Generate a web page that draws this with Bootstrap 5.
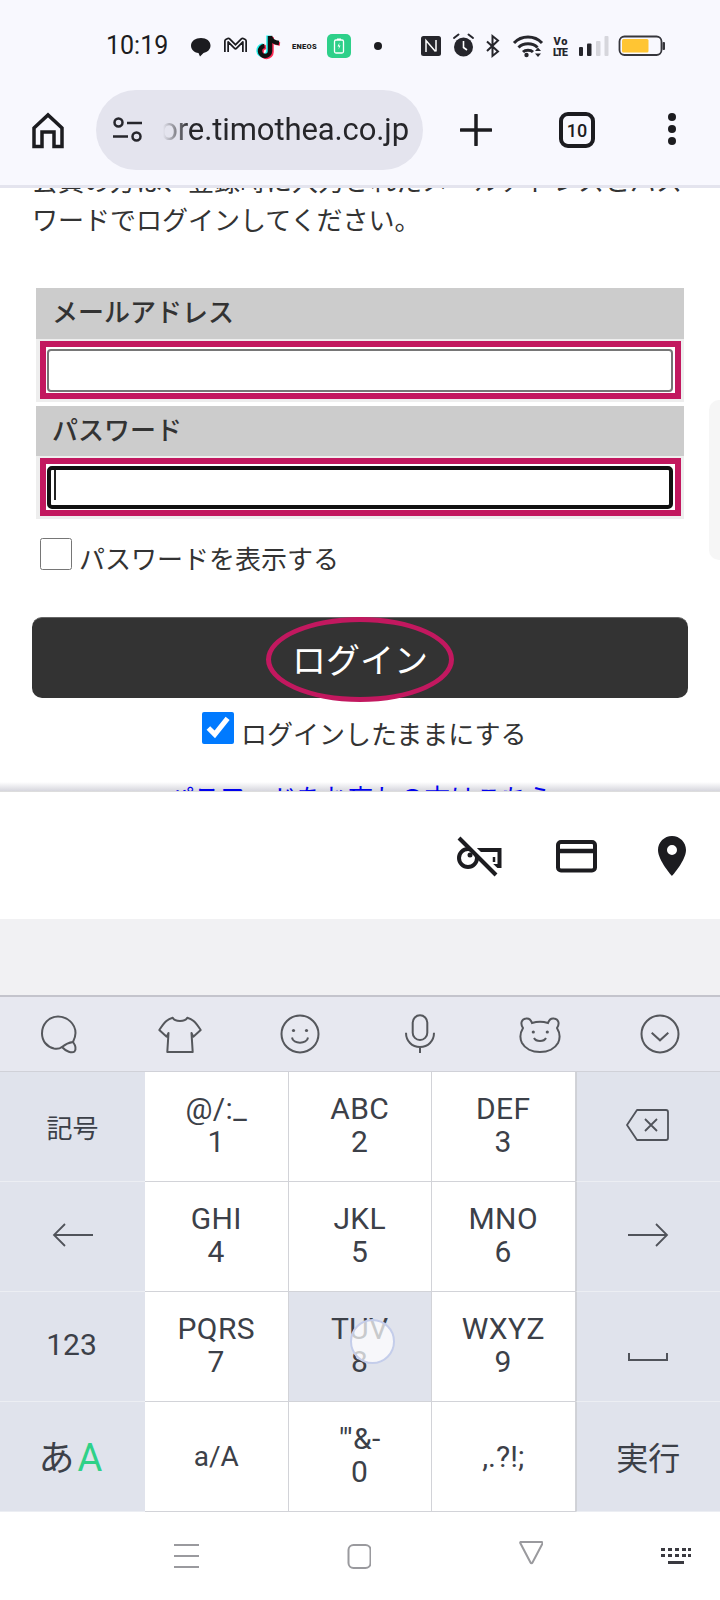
<!DOCTYPE html>
<html lang="ja">
<head>
    <meta charset="UTF-8">
    <meta name="viewport" content="width=device-width, initial-scale=1.0">
    <title>ログイン</title>
    <link href="https://cdn.jsdelivr.net/npm/bootstrap@5.3.0/dist/css/bootstrap.min.css" rel="stylesheet">
    <style>
        body {
            width: 720px;
            height: 1600px;
            overflow: hidden;
            background: #fff;
            font-family: Roboto, "Noto Sans CJK JP", sans-serif;
        }
        svg { display: block; flex: none; }

        /* browser chrome */
        .chrome { height: 188px; background: #f8f8fe; border-bottom: 3px solid #e4e4ee; position: relative; z-index: 2; }
        .status-row { height: 90px; padding-top: 30px; }
        .clock { width: 186px; padding-left: 106px; font-size: 25px; line-height: 32px; color: #1c1c20; }
        .status-gap { margin-left: 30px; }
        .tool-row { height: 80px; }
        .url-pill { width: 327px; height: 80px; margin-left: 32px; background: #e4e4ee; border-radius: 40px; padding-left: 17px; }
        .url-text { width: 250px; margin-left: 16px; overflow: hidden; white-space: nowrap; font-size: 31px; color: #26262a; letter-spacing: -.1px; -webkit-mask-image: linear-gradient(90deg, transparent 4px, #000 30px); mask-image: linear-gradient(90deg, transparent 4px, #000 30px); }
        .plus-icon { margin-left: 37px; }
        .tab-count { width: 36px; height: 36px; margin-left: 67px; border: 4px solid #1c1c20; border-radius: 9px; font-size: 18px; font-weight: 500; color: #1c1c20; }
        .dots-icon { margin-left: 71px; }

        /* page */
        .page-area { height: 603px; overflow: hidden; position: relative; color: #333; font-family: "Noto Sans CJK JP", sans-serif; font-size: 26px; }
        .intro { margin: -28px 0 0 32px; line-height: 39px; white-space: nowrap; height: 78px; }
        .login-form { margin: 50px 36px 0; }
        .field-label { height: 50px; padding-left: 16px; background: #ccc; font-weight: 500; line-height: 46px; color: #333; }
        .field-label:first-child { height: 51px; }
        .field-cell { height: 63px; margin-bottom: 4px; background: #eee; padding: 2px 3.5px 3px; }
        .field-ring { height: 58px; border: 6px solid #c2185f; background: #fff; padding: 2px 1.5px; }
        .login-input { display: block; width: 100%; height: 43px; border: 2px solid #767676; border-radius: 4px; background: #fff; }
        .login-input.is-active { border: 4px solid #111; border-radius: 5px; }
        .caret-mark { position: absolute; left: 8px; top: 6px; width: 2px; height: 30px; background: #222; }
        .show-row { margin: 19px 0 0 4px; height: 34px; line-height: 34px; }
        .show-row input, .keep-row input { width: 32px; height: 32px; margin: 0 7px 0 0; flex: none; accent-color: #007aff; }
        .show-row span { padding-top: 3px; }
        .login-btn { display: block; width: 656px; height: 81px; margin: 45px 0 0 32px; border: 0; border-top: 1px solid #666; border-radius: 10px; background: #333; color: #fff; font-size: 34px; position: relative; padding: 0; }
        .login-circle { position: absolute; left: 234px; top: -1px; width: 188px; height: 85px; border: 5px solid #c2185f; border-radius: 50%; }
        .keep-row { margin-top: 14px; margin-left: 202px; height: 34px; line-height: 34px; }
        .keep-row span { padding-top: 4px; }
        .forgot-link { margin-top: 31px; text-align: center; padding-left: 1px; line-height: 39px; font-size: 25.6px; position: relative; z-index: 1; }
        .forgot-link a { color: #0000ee; text-decoration: underline; }
        .page-shadow { position: absolute; left: 0; right: 0; bottom: 0; height: 9px; background: linear-gradient(rgba(200,200,210,0), rgba(200,200,210,.75)); }
        .side-handle { position: absolute; right: 0; top: 212px; width: 11px; height: 160px; background: #f6f6f6; border-radius: 10px 0 0 10px; }

        /* autofill panel */
        .fill-panel { height: 128px; background: #fff; border-top: 1px solid #ddd; }
        .card-icon { margin-left: 52px; }
        .pin-icon { margin-left: 51px; margin-right: 24px; }
        .suggest-strip { height: 76px; background: #f1f1f3; }

        /* keyboard */
        .kb-tools { height: 77px; background: #e7e8f0; border-top: 2px solid #c4c4cc; border-bottom: 1px solid #d0d1d8; }
        .kb-tool { width: 120px; }
        .kb-row { height: 110px; }
        .kb-key { width: 143.5px; background: #fff; border-right: 1px solid #d2d3d8; border-bottom: 1px solid #d2d3d8; color: #3c4048; font-size: 30px; letter-spacing: .4px; line-height: 33px; padding-bottom: 4px; text-align: center; }
        .kb-side { width: 145px; background: #e0e3ec; border-right: 0; border-bottom: 1px solid #eceef3; }
        .kb-side-end { width: 144.5px; border-left: 1px solid #cfd1d6; }
        .kb-hit { background: #e0e3ec; }
        .kb-row:last-child .kb-key { border-bottom: 0; }
        .kb-num { padding-right: 2px; letter-spacing: 0; }
        .kb-mid { font-size: 28px; padding-bottom: 0; letter-spacing: 0; }
        .kb-punct { padding-bottom: 0; letter-spacing: 0; }
        .kb-ja { font-size: 26px; padding-bottom: 0; letter-spacing: 0; font-family: "Noto Sans CJK JP", sans-serif; }
        .kb-big { font-size: 32px; padding-bottom: 0; letter-spacing: 0; font-family: "Noto Sans CJK JP", sans-serif; }
        .kb-kana { font-size: 36px; padding: 0 4px 0 0; letter-spacing: 0; font-family: "Noto Sans CJK JP", sans-serif; }
        .kb-kana b { font-weight: 400; color: #2fd188; font-family: Roboto, sans-serif; font-size: 38px; margin-left: 3px; }
        .touch-dot { position: absolute; left: 350px; top: 1319px; width: 45px; height: 45px; border-radius: 50%; background: rgba(255,255,255,.72); border: 2px solid #c4cdea; }

        .sys-nav { height: 88px; background: #fff; padding-left: 174px; }
        .nav-gap-a { margin-left: 148px; }
        .nav-gap-b { margin-left: 118px; }
    </style>
</head>
<body class="position-relative">
    <div class="chrome">
        <div class="status-row d-flex align-items-start">
            <div class="clock">10:19</div>
            <svg width="200" height="32" viewBox="186 30 200 32">
                <path d="M201 38c5.500 0 9.500 3 9.500 7.500 0 4-3 6.500-7 7.500l-3.500 3.500-1.500-3.500c-4.500-.5-7.500-3.500-7.500-7.500 0-4.500 4.500-7.500 10-7.500z" fill="#1c1c20"/>
                <path d="M226.500 52V41l2-1 7 7 7-7 2 1v11" fill="none" stroke="#1c1c20" stroke-width="5" stroke-linejoin="round"/>
                <path d="M226.500 52V41l2-1 7 7 7-7 2 1v11" fill="none" stroke="#f8f8fe" stroke-width="1.500" stroke-linejoin="round"/>
                <path d="M270 36v15a5 5 0 1 1-5.500-5" fill="none" stroke="#25f4ee" stroke-width="4.500" transform="translate(-1.500 -.5)"/>
                <path d="M270 36v15a5 5 0 1 1-5.500-5" fill="none" stroke="#fe2c55" stroke-width="4.500" transform="translate(1.500 1)"/>
                <path d="M270 36c.5 4 4 6.500 9 7" fill="none" stroke="#fe2c55" stroke-width="3.500" transform="translate(1 1)"/>
                <path d="M270 36c.5 4 4 6.500 9 7M270 36v15a5 5 0 1 1-5.500-5" fill="none" stroke="#111" stroke-width="4.500"/>
                <text x="292" y="49" font-family="Roboto, sans-serif" font-size="7.500" font-weight="900" fill="#1c1c20" letter-spacing=".3">ENEOS</text>
                <rect x="327" y="34" width="24" height="24" rx="5" fill="#2ed08a"/>
                <rect x="334.500" y="40" width="9" height="13" rx="1.500" fill="none" stroke="#fff" stroke-width="1.300"/>
                <rect x="337" y="38.500" width="4" height="1.500" fill="#fff"/>
                <path d="M339.500 42.500l-2 4h1.500l-.5 3 2-4h-1.500z" fill="#fff"/>
                <circle cx="378" cy="46" r="4" fill="#1c1c20"/>
            </svg>
            <svg class="status-gap" width="254" height="32" viewBox="416 30 254 32">
                <rect x="421" y="36" width="20" height="20" rx="2.500" fill="#26262c"/>
                <path d="M426 52V40.500l9.500 11M436 40v11.500" fill="none" stroke="#fff" stroke-width="1.500"/>
                <circle cx="463.500" cy="47" r="9.500" fill="#26262c"/>
                <path d="M463.500 41v6.500l3.500 2.500" fill="none" stroke="#fff" stroke-width="1.600"/>
                <path d="M454 38l4.500-3.500M473 38l-4.500-3.500" stroke="#26262c" stroke-width="2" stroke-linecap="round"/>
                <path d="M487 41.500l11 10-5.500 4.500V36l5.500 4.500-11 10.500" fill="none" stroke="#26262c" stroke-width="2"/>
                <path d="M514 43c7.500-8 20.500-8 28 0M518.500 47.500c5-5 14-5 19 0M523 52c2.500-2.500 7.500-2.500 10 0" fill="none" stroke="#26262c" stroke-width="3"/>
                <circle cx="526.500" cy="55" r="2.200" fill="#26262c"/>
                <path d="M535 51l3-3.500 3 3.500zM535 53.500l3 3.500 3-3.500z" fill="#26262c"/>
                <text x="553.500" y="45" font-family="Roboto, sans-serif" font-size="11" font-weight="900" fill="#26262c" textLength="14">Vo</text>
                <text x="553" y="56" font-family="Roboto, sans-serif" font-size="10.500" font-weight="900" fill="#26262c" textLength="15">LTE</text>
                <rect x="579" y="47" width="4" height="9" rx="1" fill="#26262c"/>
                <rect x="587" y="43.500" width="4.500" height="12.500" rx="1" fill="#26262c"/>
                <rect x="596" y="41" width="4.500" height="15" rx="1" fill="#d6d6dc"/>
                <rect x="604.500" y="36" width="4" height="20" rx="1" fill="#d6d6dc"/>
                <rect x="619.500" y="36.500" width="42" height="18.500" rx="5" fill="none" stroke="#36363c" stroke-width="1.800"/>
                <rect x="622" y="39" width="26.500" height="13.500" rx="1.500" fill="#ffc533"/>
                <rect x="662.500" y="42" width="2.500" height="8" rx="1" fill="#36363c"/>
            </svg>
        </div>
        <div class="tool-row d-flex align-items-center">
            <svg width="64" height="80" viewBox="0 89 64 80">
                <path d="M34 145.500V127l14-13 14 13v18.500h-8V131H42v14.500z" fill="none" stroke="#1c1c20" stroke-width="3.500"/>
            </svg>
            <div class="url-pill d-flex align-items-center">
                <svg width="30" height="26" viewBox="113 117 30 26">
                    <circle cx="118.500" cy="122.500" r="4" fill="none" stroke="#26262c" stroke-width="2.500"/>
                    <path d="M127 123h15M113 136.500h15" stroke="#26262c" stroke-width="2.500"/>
                    <circle cx="136.500" cy="136.500" r="4" fill="none" stroke="#26262c" stroke-width="2.500"/>
                </svg>
                <div class="url-text d-flex justify-content-end">store.timothea.co.jp</div>
            </div>
            <svg class="plus-icon" width="32" height="32" viewBox="0 0 32 32">
                <path d="M16 1v30M1 16h30" stroke="#1c1c20" stroke-width="3.500" stroke-linecap="round"/>
            </svg>
            <div class="tab-count d-flex align-items-center justify-content-center">10</div>
            <svg class="dots-icon" width="12" height="36" viewBox="0 0 12 36">
                <circle cx="6" cy="5" r="4" fill="#1c1c20"/><circle cx="6" cy="17" r="4" fill="#1c1c20"/><circle cx="6" cy="29" r="4" fill="#1c1c20"/>
            </svg>
        </div>
    </div>

    <div class="page-area">
        <p class="intro mb-0">会員の方は、登録時に入力されたメールアドレスとパス<br>ワードでログインしてください。</p>
        <form class="login-form">
            <div class="field-label">メールアドレス</div>
            <div class="field-cell"><div class="field-ring"><input class="login-input" type="text" aria-label="メールアドレス"></div></div>
            <div class="field-label">パスワード</div>
            <div class="field-cell mb-0"><div class="field-ring position-relative"><input class="login-input is-active" type="password" aria-label="パスワード"><span class="caret-mark"></span></div></div>
            <label class="show-row d-flex align-items-start"><input type="checkbox"><span>パスワードを表示する</span></label>
        </form>
        <button class="login-btn" type="button">ログイン<span class="login-circle"></span></button>
        <label class="keep-row d-flex align-items-start"><input type="checkbox" checked><span>ログインしたままにする</span></label>
        <div class="forgot-link"><a href="#">パスワードをお忘れの方はこちら</a></div>
        <div class="side-handle"></div>
        <div class="page-shadow"></div>
    </div>

    <div class="fill-panel d-flex align-items-center justify-content-end">
        <svg width="48" height="44" viewBox="456 834 48 44">
            <circle cx="469" cy="858" r="9" fill="none" stroke="#1c1c20" stroke-width="4"/>
            <circle cx="471" cy="855" r="2.500" fill="#1c1c20"/>
            <path d="M478 850h22.500v16H491" fill="none" stroke="#1c1c20" stroke-width="4"/>
            <path d="M495 857v5" stroke="#1c1c20" stroke-width="2.500"/>
            <path d="M463 837l38 37" stroke="#fff" stroke-width="5"/>
            <path d="M460 838l37 37" stroke="#1c1c20" stroke-width="4"/>
        </svg>
        <svg class="card-icon" width="42" height="34" viewBox="555 838 42 34">
            <rect x="558" y="841" width="37" height="28.500" rx="3" fill="none" stroke="#1c1c20" stroke-width="4"/>
            <path d="M557 850h38" stroke="#1c1c20" stroke-width="4.500"/>
        </svg>
        <svg class="pin-icon" width="48" height="48" viewBox="0 0 24 24">
            <path d="M12 2C8.130 2 5 5.130 5 9c0 5.250 7 13 7 13s7-7.750 7-13c0-3.870-3.130-7-7-7zm0 9.500a2.500 2.500 0 1 1 0-5 2.500 2.500 0 0 1 0 5z" fill="#1c1c20"/>
        </svg>
    </div>
    <div class="suggest-strip"></div>

    <div class="kb-tools d-flex align-items-center">
        <div class="kb-tool d-flex justify-content-center"><svg width="44" height="44" viewBox="0 0 44 44" fill="none" stroke="#55575c" stroke-width="2"><path d="M24 35c-2 1.500-5 2-8 1.500C9 35 4 29 4 21.500 4 12 11 4.500 20 4.500c9.500 0 17.500 7.500 17.500 16.500 0 3-1 6-2.500 9"/><path d="M24 35c3-2.500 7-4.500 11-5 2.500 3.500 3.500 7 1.500 9.500-2.500 2-8.500 0-12.500-4.500z"/></svg></div>
        <div class="kb-tool d-flex justify-content-center"><svg width="44" height="44" viewBox="0 0 44 44" fill="none" stroke="#55575c" stroke-width="2" stroke-linejoin="round"><path d="M14.700 5.700C17 10 27 10 29.300 5.700 34 7 37 9 42.700 18l-7.400 6.700-1.800-3.700 1.200 19H9.300l1.200-19-1.800 3.700L1.300 18C7 9 10 7 14.700 5.700z"/></svg></div>
        <div class="kb-tool d-flex justify-content-center"><svg width="44" height="44" viewBox="0 0 44 44" fill="none" stroke="#55575c" stroke-width="2"><circle cx="22" cy="22" r="18.500"/><circle cx="15.500" cy="18.500" r="1.600" fill="#55575c" stroke="none"/><circle cx="28.500" cy="18.500" r="1.600" fill="#55575c" stroke="none"/><path d="M14 25.500c1 7 15 7 16 0"/></svg></div>
        <div class="kb-tool d-flex justify-content-center"><svg width="44" height="44" viewBox="0 0 44 44" fill="none" stroke="#55575c" stroke-width="2"><rect x="14.700" y="3.300" width="14.600" height="24.700" rx="7.300"/><path d="M8 20.700C8 29 14 35 22 35s14-6 14-14.300M22 35v6"/></svg></div>
        <div class="kb-tool d-flex justify-content-center"><svg width="44" height="44" viewBox="0 0 44 44" fill="none" stroke="#55575c" stroke-width="2"><path d="M14 11c5-1.500 11-1.500 16 0 1-3 3-5 6-4.500 4.500.5 6 5 3 9.500 3 5 3 11 1 15-3 5.500-10 9-18 9S7 36.500 4 31c-2-4-2-10 1-15-3-4.500-1.500-9 3-9.500 3-.5 5 1.500 6 4.500z"/><circle cx="15.300" cy="20" r="1.600" fill="#55575c" stroke="none"/><circle cx="29.300" cy="20" r="1.600" fill="#55575c" stroke="none"/><path d="M16 26c2 4 10 4 12 0"/></svg></div>
        <div class="kb-tool d-flex justify-content-center"><svg width="44" height="44" viewBox="0 0 44 44" fill="none" stroke="#55575c" stroke-width="2"><circle cx="22" cy="22" r="18.500"/><path d="M13.700 20.700l8.300 7.600 8.300-7.600"/></svg></div>
    </div>
    <div class="kb-row d-flex">
        <div class="kb-key kb-side kb-ja d-flex align-items-center justify-content-center">記号</div>
        <div class="kb-key d-flex align-items-center justify-content-center"><div>@/:_<br>1</div></div>
        <div class="kb-key d-flex align-items-center justify-content-center"><div>ABC<br>2</div></div>
        <div class="kb-key d-flex align-items-center justify-content-center"><div>DEF<br>3</div></div>
        <div class="kb-key kb-side kb-side-end d-flex align-items-center justify-content-center">
            <svg width="44" height="34" viewBox="0 0 44 34" fill="none" stroke="#50535a" stroke-width="1.800" stroke-linejoin="round"><path d="M11 2h29a2 2 0 0 1 2 2v26a2 2 0 0 1-2 2H11L1 17z"/><path d="M19 11l12 12M31 11L19 23"/></svg>
        </div>
    </div>
    <div class="kb-row d-flex">
        <div class="kb-key kb-side d-flex align-items-center justify-content-center">
            <svg width="42" height="26" viewBox="0 0 42 26" fill="none" stroke="#50535a" stroke-width="1.800"><path d="M41 13H2M13 2L2 13l11 11"/></svg>
        </div>
        <div class="kb-key d-flex align-items-center justify-content-center"><div>GHI<br>4</div></div>
        <div class="kb-key d-flex align-items-center justify-content-center"><div>JKL<br>5</div></div>
        <div class="kb-key d-flex align-items-center justify-content-center"><div>MNO<br>6</div></div>
        <div class="kb-key kb-side kb-side-end d-flex align-items-center justify-content-center">
            <svg width="42" height="26" viewBox="0 0 42 26" fill="none" stroke="#50535a" stroke-width="1.800"><path d="M1 13h39M29 2l11 11-11 11"/></svg>
        </div>
    </div>
    <div class="kb-row d-flex">
        <div class="kb-key kb-side kb-num d-flex align-items-center justify-content-center"><div>123</div></div>
        <div class="kb-key d-flex align-items-center justify-content-center"><div>PQRS<br>7</div></div>
        <div class="kb-key kb-hit d-flex align-items-center justify-content-center"><div>TUV<br>8</div></div>
        <div class="kb-key d-flex align-items-center justify-content-center"><div>WXYZ<br>9</div></div>
        <div class="kb-key kb-side kb-side-end d-flex align-items-center justify-content-center">
            <svg class="mt-4" width="40" height="10" viewBox="0 0 40 10" fill="none" stroke="#50535a" stroke-width="2"><path d="M1 1v7h38V1"/></svg>
        </div>
    </div>
    <div class="kb-row d-flex">
        <div class="kb-key kb-side kb-kana d-flex align-items-center justify-content-center"><div>あ<b>A</b></div></div>
        <div class="kb-key kb-mid d-flex align-items-center justify-content-center"><div>a/A</div></div>
        <div class="kb-key d-flex align-items-center justify-content-center"><div>&quot;'&amp;-<br>0</div></div>
        <div class="kb-key kb-punct d-flex align-items-center justify-content-center"><div>,.?!;</div></div>
        <div class="kb-key kb-side kb-side-end kb-big d-flex align-items-center justify-content-center"><div>実行</div></div>
    </div>
    <div class="touch-dot"></div>

    <div class="sys-nav d-flex">
        <svg width="25" height="88" viewBox="174 1512 25 88"><path d="M174 1545h25M174 1556h25M174 1567h25" stroke="#9a9a9e" stroke-width="2"/></svg>
        <svg class="nav-gap-a" width="24" height="88" viewBox="346.500 1512 24 88"><rect x="348" y="1545" width="22" height="23" rx="5" fill="none" stroke="#9a9a9e" stroke-width="2"/></svg>
        <svg class="nav-gap-a" width="24" height="88" viewBox="518.500 1512 24 88"><path d="M520 1542h21a1 1 0 0 1 1 1.500l-10 19c-.5 1-1.500 1-2 0l-10-19a1 1 0 0 1 0-1.500z" fill="none" stroke="#9a9a9e" stroke-width="2"/></svg>
        <svg class="nav-gap-b" width="31" height="88" viewBox="661 1512 31 88" fill="#3a3a40">
            <path d="M661 1548h4v3h-4zM668 1548h4v3h-4zM675 1548h4v3h-4zM682 1548h4v3h-4zM688 1548h3v3h-3zM661 1554h4v3h-4zM668 1554h4v3h-4zM675 1554h4v3h-4zM682 1554h4v3h-4zM688 1554h3v3h-3zM668 1561h16v3h-16z"/>
        </svg>
    </div>
    <script src="https://cdn.jsdelivr.net/npm/bootstrap@5.3.0/dist/js/bootstrap.bundle.min.js"></script>
</body>
</html>
